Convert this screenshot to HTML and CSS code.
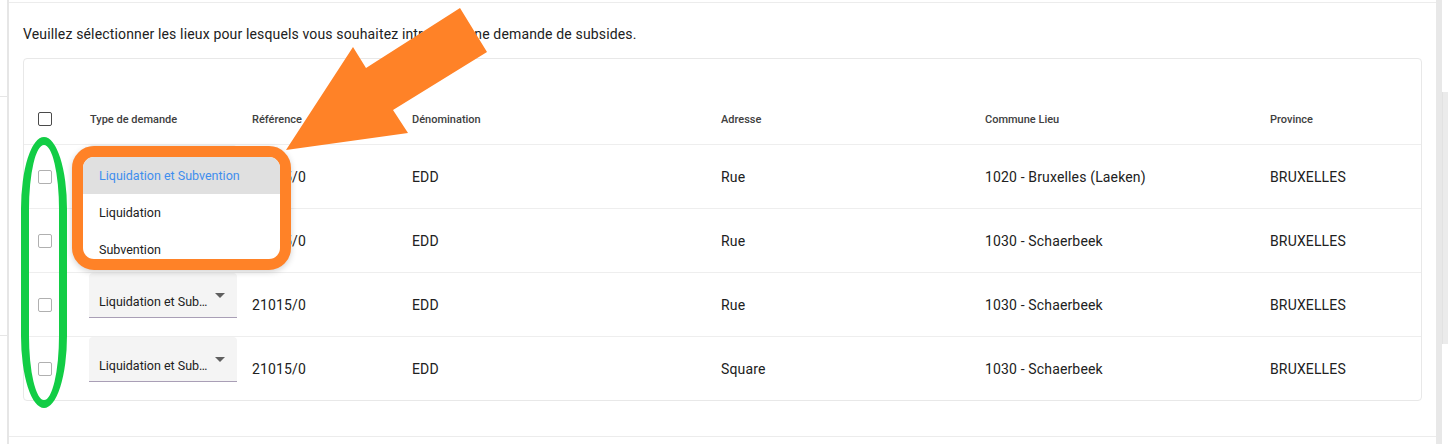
FILE: index.html
```html
<!DOCTYPE html>
<html lang="fr">
<head>
<meta charset="utf-8">
<title>Demande de subsides</title>
<link rel="stylesheet" href="styles.css">
</head>
<body>
<div class="shell">
  <div class="gutter">
    <div class="gutter-line first"></div>
    <div class="gutter-line second"></div>
  </div>
  <main class="page">
    <p class="intro">Veuillez sélectionner les lieux pour lesquels vous souhaitez introduire une demande de subsides.</p>
    <div class="card">
      <div class="row head">
        <div class="cell chk"><span class="box dark"></span></div>
        <div class="cell">Type de demande</div>
        <div class="cell">Référence</div>
        <div class="cell">Dénomination</div>
        <div class="cell">Adresse</div>
        <div class="cell">Commune Lieu</div>
        <div class="cell">Province</div>
      </div>
      <div class="row">
        <div class="cell chk"><span class="box"></span></div>
        <div class="cell sel"><div class="select"><span class="select-text">Liquidation et Subvention</span><span class="caret"></span></div></div>
        <div class="cell">21015/0</div>
        <div class="cell">EDD</div>
        <div class="cell">Rue</div>
        <div class="cell">1020 - Bruxelles (Laeken)</div>
        <div class="cell">BRUXELLES</div>
      </div>
      <div class="row">
        <div class="cell chk"><span class="box"></span></div>
        <div class="cell sel"><div class="select"><span class="select-text">Liquidation et Subvention</span><span class="caret"></span></div></div>
        <div class="cell">21015/0</div>
        <div class="cell">EDD</div>
        <div class="cell">Rue</div>
        <div class="cell">1030 - Schaerbeek</div>
        <div class="cell">BRUXELLES</div>
      </div>
      <div class="row">
        <div class="cell chk"><span class="box"></span></div>
        <div class="cell sel"><div class="select"><span class="select-text">Liquidation et Subvention</span><span class="caret"></span></div></div>
        <div class="cell">21015/0</div>
        <div class="cell">EDD</div>
        <div class="cell">Rue</div>
        <div class="cell">1030 - Schaerbeek</div>
        <div class="cell">BRUXELLES</div>
      </div>
      <div class="row">
        <div class="cell chk"><span class="box"></span></div>
        <div class="cell sel"><div class="select"><span class="select-text">Liquidation et Subvention</span><span class="caret"></span></div></div>
        <div class="cell">21015/0</div>
        <div class="cell">EDD</div>
        <div class="cell">Square</div>
        <div class="cell">1030 - Schaerbeek</div>
        <div class="cell">BRUXELLES</div>
      </div>
    </div>
  </main>
  <div class="scroll"><div class="thumb"></div></div>

  <svg class="arrow" width="500" height="160" viewBox="0 0 500 160">
    <polygon points="286,150 353,47 366,68 460,8 487,52 393,110 408,133" fill="#ff8227"/>
  </svg>
  <div class="menu-ring">
    <ul class="menu">
      <li class="item active">Liquidation et Subvention</li>
      <li class="item">Liquidation</li>
      <li class="item">Subvention</li>
    </ul>
  </div>
  <div class="ring-green"></div>
</div>
</body>
</html>
```

FILE: styles.css
```css
* { box-sizing: border-box; }

html, body {
  margin: 0;
  padding: 0;
  background: #ffffff;
}

body {
  font-family: Roboto, "Liberation Sans", sans-serif;
  color: #212121;
}

.shell {
  position: relative;
  display: flex;
  width: 1448px;
  height: 444px;
  overflow: hidden;
}

.gutter {
  width: 9px;
  flex: 0 0 9px;
  border-right: 2px solid #e6e6e6;
}

.gutter-line {
  height: 1px;
  background: #e6e6e6;
}

.gutter-line.first { margin-top: 96px; }
.gutter-line.second { margin-top: 238px; }

.page {
  flex: 1;
  align-self: flex-start;
  margin-top: 2px;
  height: 435px;
  border-top: 1px solid #ececec;
  border-bottom: 1px solid #ececec;
  padding: 0 14px;
}

.intro {
  margin: 21px 0 0;
  font-size: 14px;
  line-height: 20px;
  letter-spacing: 0.15px;
  color: #212121;
}

.card {
  margin-top: 14px;
  border: 1px solid #e8e8e8;
  border-radius: 4px;
}

.row {
  display: grid;
  grid-template-columns: 66px 162px 160px 309px 264px 285px 1fr;
  height: 64px;
  border-top: 1px solid #eeeeee;
  align-items: center;
  font-size: 14px;
  letter-spacing: 0.15px;
}

.row.head {
  border-top: 0;
  height: 85px;
  padding-top: 35px;
  font-size: 11px;
  font-weight: 500;
  letter-spacing: 0;
  color: #404040;
}

.cell {
  white-space: nowrap;
}

.cell.chk {
  padding-left: 14px;
  display: flex;
  align-items: center;
}

.box {
  display: block;
  width: 14px;
  height: 14px;
  border: 1px solid #b0b0b0;
  border-radius: 2px;
  background: #ffffff;
}

.box.dark {
  border: 1.5px solid #4a4a4a;
}

.cell.sel {
  align-self: start;
}

.select {
  display: flex;
  align-items: flex-start;
  width: 148px;
  height: 45px;
  margin-left: -1px;
  padding: 21px 12px 0 10px;
  background: #f4f4f4;
  border-radius: 4px 4px 0 0;
  border-bottom: 1px solid #a99fb6;
  font-size: 12.5px;
  line-height: 16px;
  letter-spacing: 0;
  color: #212121;
}

.select-text {
  display: block;
  width: 112px;
  overflow: hidden;
  text-overflow: ellipsis;
  white-space: nowrap;
}

.caret {
  display: block;
  width: 0;
  height: 0;
  margin-top: -1px;
  margin-left: 4px;
  border-left: 5px solid transparent;
  border-right: 5px solid transparent;
  border-top: 5px solid #5f5f5f;
}

.scroll {
  width: 12px;
  flex: 0 0 12px;
  border-left: 6px solid #e8e8e8;
}

.thumb {
  margin-top: 92px;
  height: 252px;
  background: #ebebeb;
  border-left: 1px solid #e2e2e2;
}

/* annotations over the page */
.arrow {
  position: absolute;
  left: 0;
  top: 0;
}

.menu-ring {
  position: absolute;
  left: 72px;
  top: 146px;
  width: 219px;
  height: 124px;
  border: 11px solid #ff8227;
  border-radius: 22px;
  background: #ffffff;
  overflow: hidden;
  box-shadow: 0 2px 6px rgba(0, 0, 0, 0.18);
}

.menu {
  list-style: none;
  margin: 0;
  padding: 0;
}

.item {
  height: 37px;
  line-height: 37px;
  padding-left: 16px;
  font-size: 12.5px;
  color: #212121;
  white-space: nowrap;
}

.item.active {
  background: #e0e0e0;
  color: #3f8eee;
}

.ring-green {
  position: absolute;
  left: 21px;
  top: 137px;
  width: 46px;
  height: 271px;
  border: 8px solid #12cd45;
  border-radius: 23px / 72px;
}
```
